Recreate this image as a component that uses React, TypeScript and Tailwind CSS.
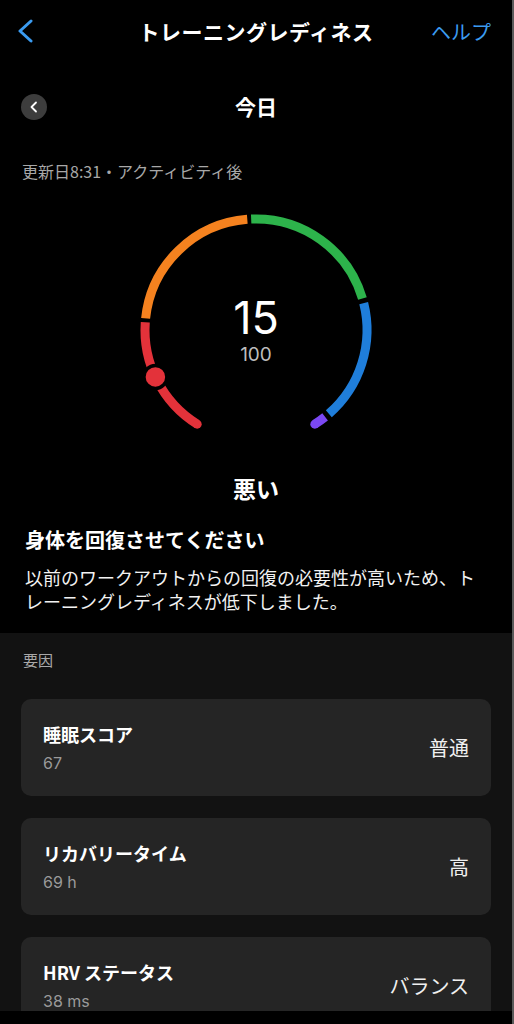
import React from "react";

const CX = 130;
const CY = 125;
const R = 111;

const pt = (deg: number) => {
  const a = (deg * Math.PI) / 180;
  return [CX + R * Math.sin(a), CY - R * Math.cos(a)];
};

const arc = (from: number, to: number) => {
  const [x1, y1] = pt(from);
  const [x2, y2] = pt(to);
  const large = to - from > 180 ? 1 : 0;
  return `M ${x1.toFixed(2)} ${y1.toFixed(2)} A ${R} ${R} 0 ${large} 1 ${x2.toFixed(2)} ${y2.toFixed(2)}`;
};

const segments = [
  { from: 212, to: 274, color: "#e3323a" },
  { from: 276, to: 355.5, color: "#f5821f" },
  { from: 357.5, to: 433.5, color: "#2db34b" },
  { from: 436, to: 499, color: "#1f7edb" },
  { from: 501.5, to: 508, color: "#7b48f2" },
];

const factors = [
  { title: "睡眠スコア", sub: "67", value: "普通" },
  { title: "リカバリータイム", sub: "69 h", value: "高" },
  { title: "HRV ステータス", sub: "38 ms", value: "バランス" },
];

const Gauge = () => {
  const [mx, my] = pt(245);
  const [sx, sy] = pt(212);
  const [ex, ey] = pt(508);
  return (
    <div className="relative mx-auto mt-[24px] h-[230px] w-[260px]">
      <svg width="260" height="230" viewBox="0 0 260 230">
        {segments.map((s) => (
          <path key={s.from} d={arc(s.from, s.to)} stroke={s.color} strokeWidth="9" fill="none" />
        ))}
        <circle cx={sx} cy={sy} r="4.5" fill="#e3323a" />
        <circle cx={ex} cy={ey} r="4.5" fill="#7b48f2" />
        <circle cx={mx} cy={my} r="11.5" fill="#e3323a" stroke="#000" strokeWidth="3.5" />
      </svg>
      <div className="absolute left-0 right-0 top-[90px] flex flex-col items-center">
        <div className="text-[45px] leading-[46px] text-white" style={{ fontFamily: "Inter, 'Noto Sans CJK JP', sans-serif" }}>15</div>
        <div className="mt-[3px] text-[19px] leading-[22px] text-[#bdbdbd]" style={{ fontFamily: "Inter, 'Noto Sans CJK JP', sans-serif" }}>100</div>
      </div>
    </div>
  );
};

export default function App() {
  return (
    <div className="flex h-[1024px] w-[514px] flex-col overflow-hidden border-r-2 border-[#5a5a5a] bg-black font-['Noto_Sans_CJK_JP',sans-serif] text-white">
      <div className="flex-1 overflow-hidden">
        <div className="relative flex h-16 items-center justify-center">
          <svg className="absolute left-[17px] top-[19px]" width="18" height="24" viewBox="0 0 18 24">
            <polyline points="14,2 3,12 14,22" fill="none" stroke="#3b9bf0" strokeWidth="3" strokeLinecap="round" strokeLinejoin="round" />
          </svg>
          <div className="text-[21px] font-bold tracking-[0.5px]">トレーニングレディネス</div>
          <div className="absolute right-[21px] top-[17px] text-[20px] text-[#3b9bf0]">ヘルプ</div>
        </div>

        <div className="relative mt-[30px] flex h-[26px] items-center justify-center">
          <div className="absolute left-[21px] top-0 flex h-[26px] w-[26px] items-center justify-center rounded-full bg-[#3d3d3d]">
            <svg width="10" height="12" viewBox="0 0 10 12">
              <polyline points="7,1.5 2.5,6 7,10.5" fill="none" stroke="#fff" strokeWidth="1.8" strokeLinecap="round" strokeLinejoin="round" />
            </svg>
          </div>
          <div className="text-[21px] font-bold">今日</div>
        </div>

        <div className="mt-[41px] pl-[22px] text-[16px] leading-[20px] text-[#a8a8a8]">更新日8:31・アクティビティ後</div>

        <Gauge />

        <div className="mt-[37px] text-center text-[23px] font-bold leading-[32px]">悪い</div>
        <div className="mt-[22px] pl-[25px] text-[20px] font-bold leading-[28px]">身体を回復させてください</div>
        <p className="mt-[11px] px-[25px] pb-[20px] text-[18px] leading-[24px] text-[#f2f2f2]">
          以前のワークアウトからの回復の必要性が高いため、トレーニングレディネスが低下しました。
        </p>

        <div className="h-full bg-[#121212] px-[21px] pt-[17px]">
          <div className="pl-[2px] text-[15px] leading-[20px] text-[#a8a8a8]">要因</div>
          <div className="mt-[29px] flex flex-col gap-[22px]">
            {factors.map((f) => (
              <div key={f.title} className="flex h-[97px] items-center justify-between rounded-[10px] bg-[#252525] px-[22px]">
                <div className="flex flex-col">
                  <div className="text-[18px] font-bold leading-[24px]">{f.title}</div>
                  <div className="mt-[7px] text-[16px] leading-[20px] text-[#9a9a9a]" style={{ fontFamily: "Inter, 'Noto Sans CJK JP', sans-serif" }}>{f.sub}</div>
                </div>
                <div className="text-[20px] text-[#f0f0f0]">{f.value}</div>
              </div>
            ))}
          </div>
        </div>
      </div>
      <div className="h-[13px] shrink-0 bg-black" />
    </div>
  );
}
